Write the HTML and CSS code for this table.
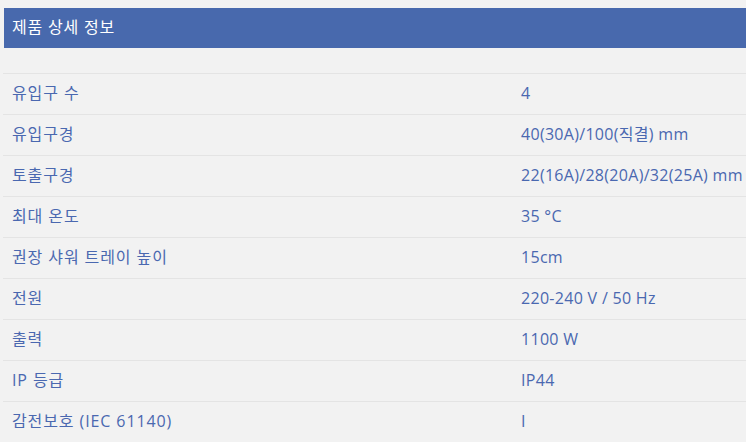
FILE: index.html
```html
<!DOCTYPE html>
<html lang="ko">
<head>
<meta charset="utf-8">
<link rel="stylesheet" href="styles.css">
</head>
<body>
<div class="panel">
  <h2 class="title">제품 상세 정보</h2>
  <div class="specs">
    <div class="row"><span class="k">유입구 수</span><span class="v">4</span></div>
    <div class="row"><span class="k">유입구경</span><span class="v">40(30A)/100(직결) mm</span></div>
    <div class="row"><span class="k">토출구경</span><span class="v">22(16A)/28(20A)/32(25A) mm</span></div>
    <div class="row"><span class="k">최대 온도</span><span class="v">35 °C</span></div>
    <div class="row"><span class="k">권장 샤워 트레이 높이</span><span class="v">15cm</span></div>
    <div class="row"><span class="k">전원</span><span class="v">220-240 V / 50 Hz</span></div>
    <div class="row"><span class="k">출력</span><span class="v">1100 W</span></div>
    <div class="row"><span class="k">IP 등급</span><span class="v">IP44</span></div>
    <div class="row"><span class="k">감전보호 (IEC 61140)</span><span class="v">I</span></div>
  </div>
</div>
</body>
</html>
```
FILE: styles.css
```css
html, body {
  margin: 0;
  padding: 0;
  background: #f2f2f2;
}
body {
  padding: 8px 0 0 3px;
  font-family: "Open Sans", "Noto Sans CJK KR", sans-serif;
}
.title {
  margin: 0 0 0 1px;
  height: 40px;
  background: #4869ad;
  color: #ffffff;
  font-size: 16px;
  font-weight: 400;
  line-height: 38px;
  padding-left: 8px;
  letter-spacing: 0.8px;
}
.specs {
  margin-top: 25px;
}
.row {
  display: flex;
  align-items: center;
  box-sizing: border-box;
  height: 41px;
  padding-bottom: 2px;
  border-top: 1px solid #e4e4e4;
  color: #4a68b0;
  font-size: 16px;
  line-height: 20px;
  white-space: nowrap;
}
.k {
  flex: 0 0 500px;
  padding-left: 9px;
  letter-spacing: 0.9px;
}
.v {
  padding-left: 9px;
  letter-spacing: 0.3px;
}
```
